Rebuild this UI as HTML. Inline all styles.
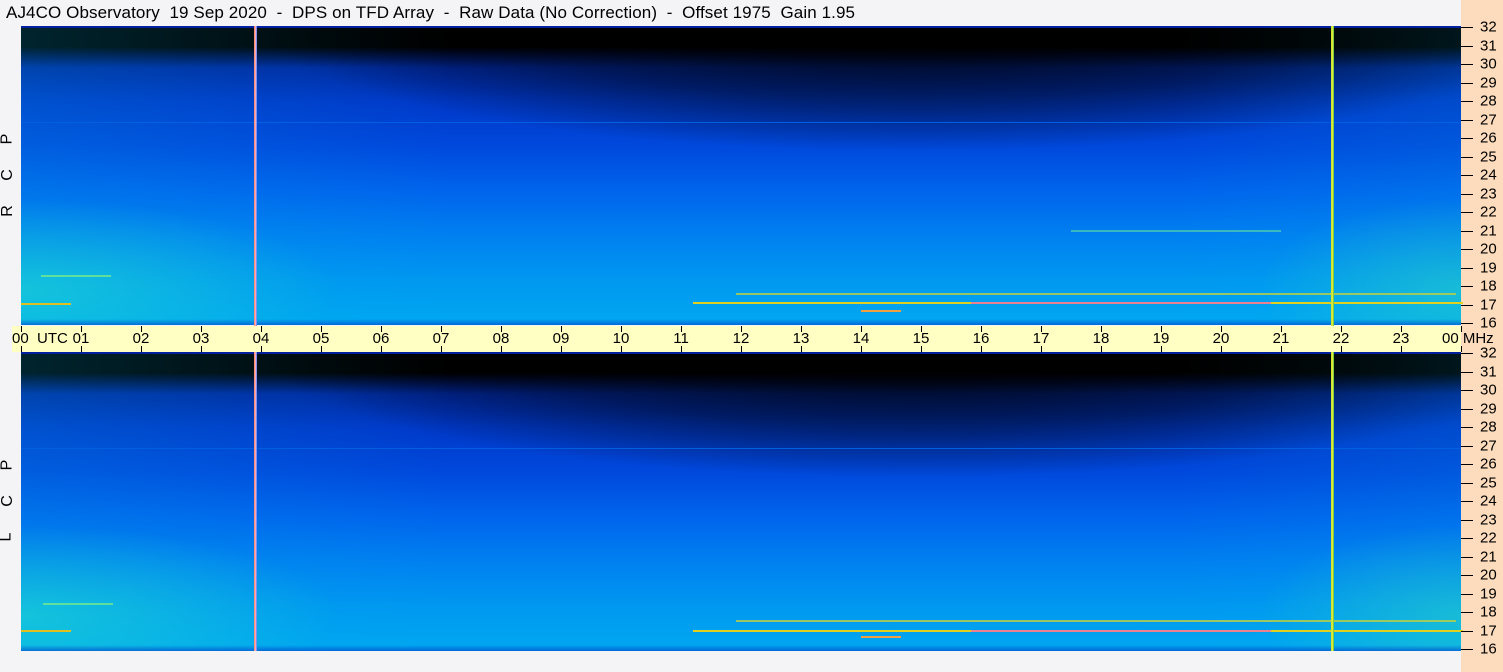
<!DOCTYPE html>
<html><head><meta charset="utf-8"><style>
*{margin:0;padding:0;box-sizing:border-box}
body{width:1503px;height:672px;background:#f4f4f6;position:relative;overflow:hidden;font-family:"Liberation Sans",sans-serif;color:#000}
.title{position:absolute;left:6px;top:3px;font-size:17px;white-space:pre;letter-spacing:0.1px}
.peach{position:absolute;left:1461px;top:0;width:42px;height:672px;background:#fcdcbc}
.plot{position:absolute;left:21px;width:1440px;height:299px;
background:
linear-gradient(to bottom,rgba(0,0,0,0) 0,rgba(0,0,0,0) 98%,rgba(0,60,200,.6) 100%),
radial-gradient(ellipse 22% 30% at 0% 88%,rgba(40,230,200,.5),rgba(0,0,0,0)),
radial-gradient(ellipse 14% 30% at 100% 88%,rgba(60,230,180,.4),rgba(0,0,0,0)),
radial-gradient(ellipse 45% 42% at 62% 0%,rgba(0,0,0,.9),rgba(0,0,0,.45) 60%,rgba(0,0,0,0)),
linear-gradient(to right,rgba(0,180,230,.2),rgba(0,0,0,0) 30%,rgba(0,0,0,0) 80%,rgba(0,180,230,.15)),
linear-gradient(to bottom,#000 0,#000 7%,#000a30 9%,#0028a0 14%,#0038c8 25%,#0048dc 40%,#0064ec 55%,#0080f0 70%,#0098f0 85%,#00a8f0 100%);}
.vl{position:absolute;width:3px}
.hl{position:absolute;height:2px}
.axis{position:absolute;left:12px;top:326px;width:1449px;height:26px;background:#ffffc4}
.tk{position:absolute;width:1px;height:6px;background:#000}
.tl{position:absolute;top:4px;font-size:15px;transform:translateX(-50%);white-space:nowrap}
.fs{position:absolute;left:1461px;height:297px;width:42px}
.ft{position:absolute;left:0;width:12px;height:1px;background:#000}
.fl{position:absolute;left:19px;font-size:15px;transform:translateY(-50%)}
.side{position:absolute;left:2px;font-size:16px;transform:rotate(-90deg)}
</style></head><body>
<div class="peach"></div>
<div class="title">AJ4CO Observatory  19 Sep 2020  -  DPS on TFD Array  -  Raw Data (No Correction)  -  Offset 1975  Gain 1.95</div>

<div class="plot" style="top:26px">
 <div style="position:absolute;left:0;top:0;width:100%;height:2px;background:#0020a0"></div>
 <div style="position:absolute;left:0;top:96px;width:100%;height:1px;background:#0060e0"></div>
 <div class="hl" style="left:672px;top:276px;width:770px;background:#e0d020"></div>
 <div class="hl" style="left:715px;top:267px;width:720px;background:#c0d040;opacity:.8"></div>
 <div class="hl" style="left:950px;top:276px;width:300px;background:#f060c0;opacity:.7"></div>
 <div class="hl" style="left:0;top:277px;width:50px;background:#e0c020"></div>
 <div class="hl" style="left:20px;top:249px;width:70px;background:#80f080;opacity:.7"></div>
 <div class="hl" style="left:840px;top:284px;width:40px;background:#f0a040"></div>
 <div class="hl" style="left:1050px;top:204px;width:210px;background:#60e0a0;opacity:.6"></div>
</div>
<div class="plot" style="top:352px">
 <div style="position:absolute;left:0;top:0;width:100%;height:2px;background:#0020a0"></div>
 <div style="position:absolute;left:0;top:96px;width:100%;height:1px;background:#0060e0"></div>
 <div class="hl" style="left:672px;top:278px;width:770px;background:#e0d020"></div>
 <div class="hl" style="left:715px;top:268px;width:720px;background:#c0d040;opacity:.8"></div>
 <div class="hl" style="left:950px;top:278px;width:300px;background:#f060c0;opacity:.7"></div>
 <div class="hl" style="left:0;top:278px;width:50px;background:#e0c020"></div>
 <div class="hl" style="left:22px;top:251px;width:70px;background:#80f080;opacity:.7"></div>
 <div class="hl" style="left:840px;top:284px;width:40px;background:#f0a040"></div>
</div>
<div class="vl" style="left:254px;top:26px;height:625px;background:linear-gradient(to right,#ff8040,#ffb0d0,#4080ff)"></div>
<div class="vl" style="left:1331px;top:26px;height:625px;background:linear-gradient(to right,#c0e020,#f0f040,#40c040)"></div>

<div class="axis" id="ax"></div>
<div class="fs" style="top:27px" id="f1"></div>
<div class="fs" style="top:353px" id="f2"></div>

<div class="side" style="top:130px">P</div>
<div class="side" style="top:166px">C</div>
<div class="side" style="top:202px">R</div>
<div class="side" style="top:456px">P</div>
<div class="side" style="top:492px">C</div>
<div class="side" style="top:528px">L</div>
<script>
var ax=document.getElementById('ax'),h='';
for(var i=0;i<=24;i++){var x=9+60*i;
h+='<div class="tk" style="left:'+x+'px;top:0"></div><div class="tk" style="left:'+x+'px;top:20px"></div>';
var t=(i%24<10?'0':'')+(i%24);
if(i==0)h+='<div class="tl" style="left:0px;transform:none">00&nbsp; UTC</div>';
else if(i==24)h+='<div class="tl" style="left:'+(x-19)+'px;transform:none">00 MHz</div>';
else h+='<div class="tl" style="left:'+x+'px">'+t+'</div>';}
ax.innerHTML=h;
['f1','f2'].forEach(function(id){var e=document.getElementById(id),s='';
for(var f=32;f>=16;f--){var y=(32-f)*18.5;
s+='<div class="ft" style="top:'+y+'px"></div><div class="fl" style="top:'+y+'px">'+f+'</div>';}
e.innerHTML=s;});
</script>
</body></html>
